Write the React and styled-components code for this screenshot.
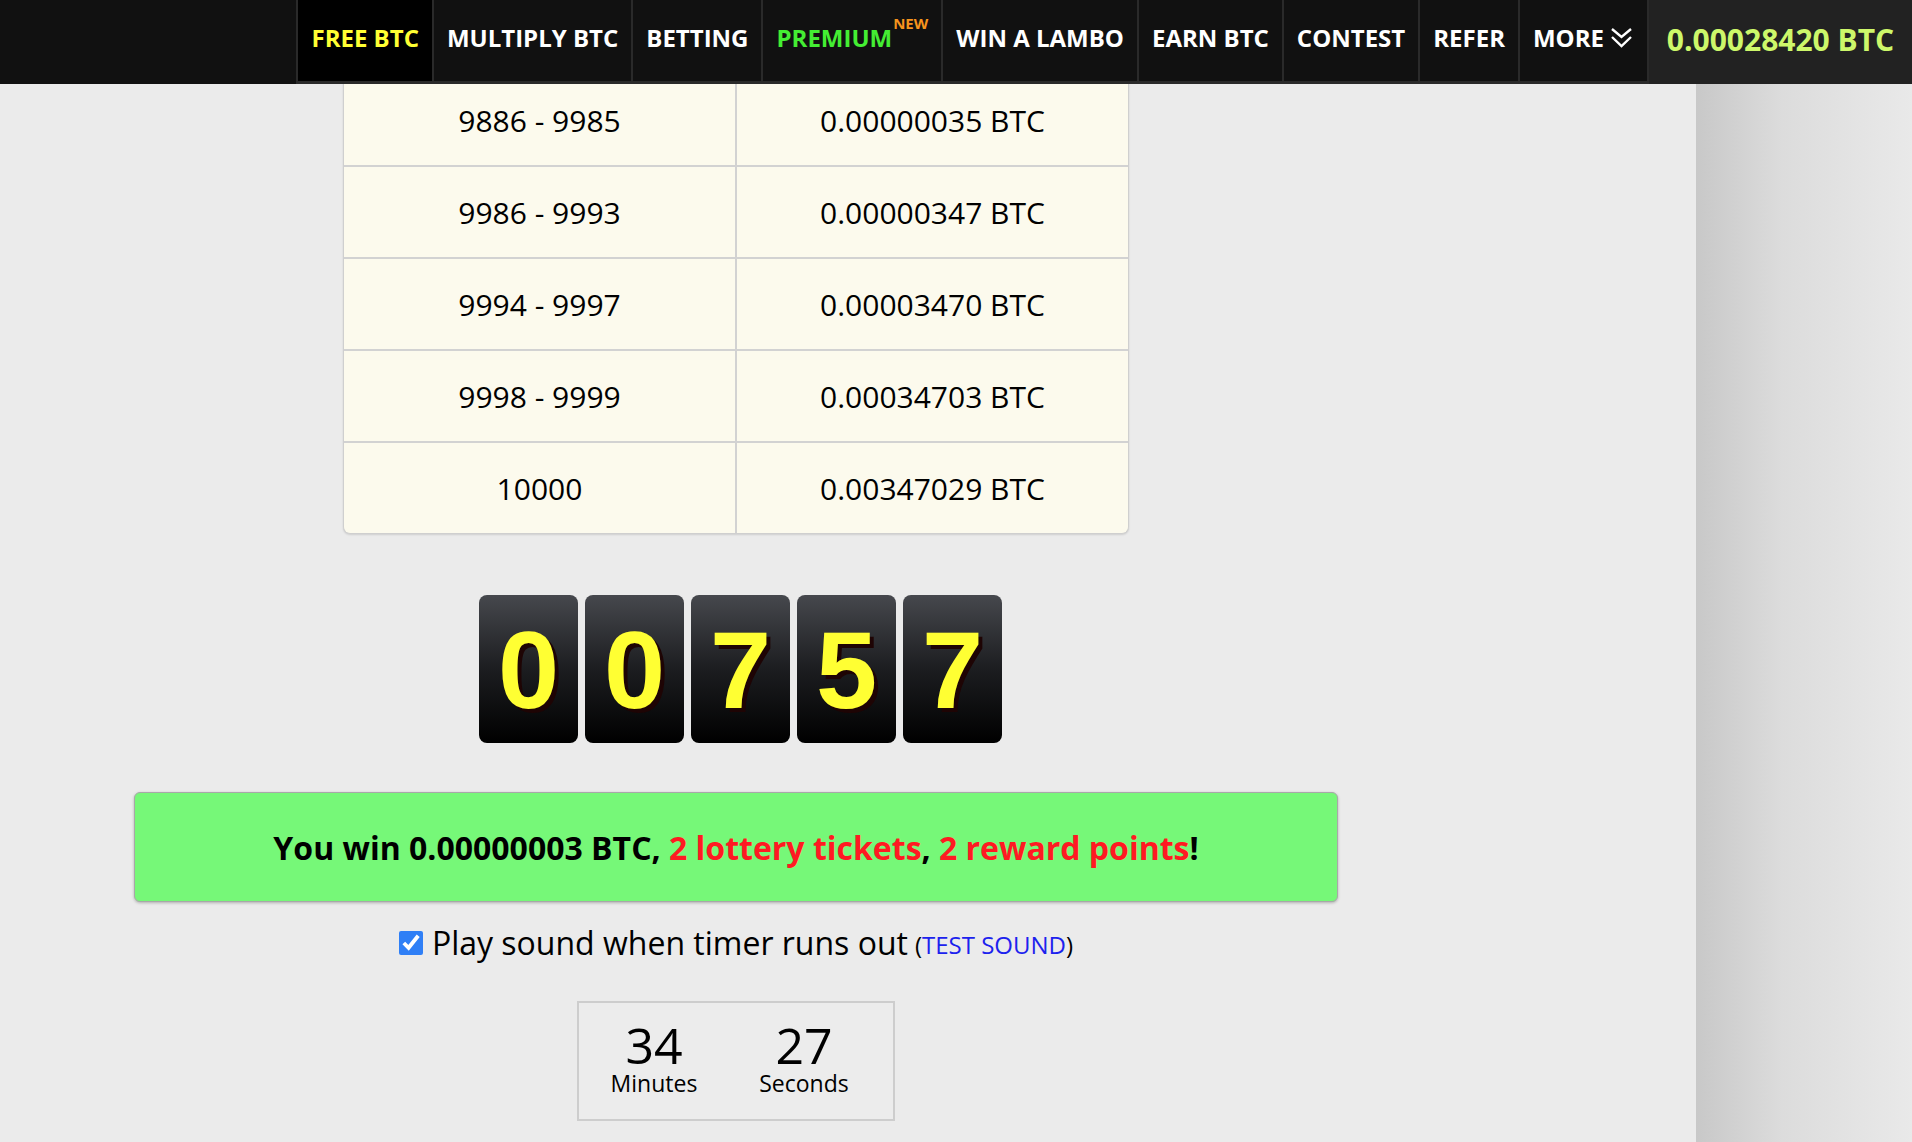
import React from "react";
import styled, { createGlobalStyle } from "styled-components";

const GlobalStyle = createGlobalStyle`
  body {
    margin: 0;
    font-family: "Open Sans", "Liberation Sans", sans-serif;
    background: #eaeaea;
    color: #000;
  }
`;

const menu = [
  { label: "FREE BTC", color: "#ffff33", active: true },
  { label: "MULTIPLY BTC" },
  { label: "BETTING" },
  { label: "PREMIUM", color: "#44ee33", badge: "NEW" },
  { label: "WIN A LAMBO" },
  { label: "EARN BTC" },
  { label: "CONTEST" },
  { label: "REFER" },
  { label: "MORE", more: true },
];

const payouts = [
  ["9886 - 9985", "0.00000035 BTC"],
  ["9986 - 9993", "0.00000347 BTC"],
  ["9994 - 9997", "0.00003470 BTC"],
  ["9998 - 9999", "0.00034703 BTC"],
  ["10000", "0.00347029 BTC"],
];

const digits = ["0", "0", "7", "5", "7"];

function ChevronsDown() {
  return (
    <svg width="25" height="22" viewBox="0 0 25 22" fill="none">
      <polyline points="3,2 12.5,10 22,2" stroke="#fff" strokeWidth="2.4" />
      <polyline points="3,10 12.5,19 22,10" stroke="#fff" strokeWidth="2.4" />
    </svg>
  );
}

export default function App() {
  return (
    <>
      <GlobalStyle />
      <TopBar>
        <Spacer />
        <Menu>
          {menu.map((item) => (
            <MenuItem key={item.label} $active={item.active} $color={item.color}>
              {item.label}
              {item.badge && <Badge>{item.badge}</Badge>}
              {item.more && <ChevronsDown />}
            </MenuItem>
          ))}
        </Menu>
        <Balance>0.00028420 BTC</Balance>
      </TopBar>
      <Layout>
        <Main>
          <Column>
            <TableWrap>
              <PayoutTable>
                <tbody>
                  {payouts.map(([range, amount]) => (
                    <tr key={range}>
                      <Cell>{range}</Cell>
                      <Cell>{amount}</Cell>
                    </tr>
                  ))}
                </tbody>
              </PayoutTable>
            </TableWrap>

            <Flipper>
              {digits.map((d, i) => (
                <DigitBox key={i}>{d}</DigitBox>
              ))}
            </Flipper>

            <WinBar>
              You win 0.00000003 BTC, <Red>2 lottery tickets</Red>,{" "}
              <Red>2 reward points</Red>!
            </WinBar>

            <SoundRow>
              <Check type="checkbox" defaultChecked />
              <span>Play sound when timer runs out</span>
              <TestSound>
                (<a>TEST SOUND</a>)
              </TestSound>
            </SoundRow>

            <TimerBox>
              <TimerCol>
                <TimerNum>34</TimerNum>
                <TimerLabel>Minutes</TimerLabel>
              </TimerCol>
              <TimerCol>
                <TimerNum>27</TimerNum>
                <TimerLabel>Seconds</TimerLabel>
              </TimerCol>
            </TimerBox>
          </Column>
        </Main>
        <Shade />
      </Layout>
    </>
  );
}

const TopBar = styled.header`
  position: fixed;
  top: 0;
  left: 0;
  right: 0;
  z-index: 10;
  height: 84px;
  display: flex;
  background: #111;
`;

const Spacer = styled.div`
  flex: 1;
`;

const Menu = styled.nav`
  display: flex;
  border-bottom: 3px solid #2a2a2a;
  border-left: 2px solid #2a2a2a;
  height: 81px;
`;

const MenuItem = styled.div`
  display: flex;
  align-items: center;
  gap: 5px;
  padding: 0 13px 6px;
  border-right: 2px solid #2a2a2a;
  background: ${(p) => (p.$active ? "#000" : "#111")};
  color: ${(p) => p.$color || "#fff"};
  font-size: 24px;
  font-weight: 700;
  white-space: nowrap;
`;

const Badge = styled.sup`
  color: #f7941d;
  font-size: 15px;
  font-weight: 700;
  margin-left: -4px;
  align-self: flex-start;
  margin-top: 13px;
`;

const Balance = styled.div`
  width: 263px;
  height: 84px;
  display: flex;
  align-items: center;
  justify-content: center;
  padding-bottom: 6px;
  box-sizing: border-box;
  background: #222;
  color: #cdf76a;
  font-size: 30px;
  font-weight: 700;
  white-space: nowrap;
`;

const Layout = styled.div`
  display: flex;
  min-height: 100vh;
`;

const Main = styled.main`
  width: 1696px;
  flex-shrink: 0;
  padding-top: 73px;
  padding-bottom: 40px;
  background: #ebebeb;
`;

const Shade = styled.div`
  flex: 1;
  background: linear-gradient(to right, #c8c8c8 0%, #dcdcdc 40%, #e9e9e9 100%);
`;

const Column = styled.div`
  width: 1472px;
  display: flex;
  flex-direction: column;
  align-items: center;
`;

const TableWrap = styled.div`
  width: 784px;
  border: 1px solid #cfcfcf;
  border-top: none;
  border-radius: 0 0 7px 7px;
  overflow: hidden;
  box-shadow: 0 1px 2px rgba(0, 0, 0, 0.12);
  background: #fcfaed;
`;

const PayoutTable = styled.table`
  width: 100%;
  border-collapse: collapse;
`;

const Cell = styled.td`
  width: 50%;
  height: 90px;
  padding: 0;
  text-align: center;
  font-size: 30px;
  border-top: 2px solid #d2d2d2;
  &:first-child {
    border-right: 2px solid #d2d2d2;
  }
`;

const Flipper = styled.div`
  display: flex;
  gap: 7px;
  margin-top: 61px;
  padding-left: 9px;
`;

const DigitBox = styled.div`
  width: 99px;
  height: 148px;
  border-radius: 8px;
  background: linear-gradient(to bottom, #46484d 0%, #1c1d20 50%, #000 100%);
  display: flex;
  align-items: center;
  justify-content: center;
  color: #ffff33;
  font-family: "Liberation Sans", Arial, sans-serif;
  font-weight: 700;
  font-size: 110px;
  text-shadow: 4px 4px 0 #1e0404;
`;

const WinBar = styled.div`
  margin-top: 49px;
  width: 1204px;
  height: 110px;
  box-sizing: border-box;
  display: flex;
  align-items: center;
  justify-content: center;
  background: #76f878;
  border: 1px solid #a8a8a8;
  border-radius: 6px;
  box-shadow: 0 1px 3px rgba(0, 0, 0, 0.25);
  font-size: 32px;
  font-weight: 700;
  white-space: pre;
`;

const Red = styled.span`
  color: #ff1a22;
`;

const SoundRow = styled.label`
  margin-top: 17px;
  display: flex;
  align-items: center;
  gap: 9px;
  font-size: 32px;
  line-height: 44px;
`;

const Check = styled.input`
  width: 24px;
  height: 24px;
  margin: 0;
  accent-color: #2f7ff6;
`;

const TestSound = styled.span`
  font-size: 24px;
  margin-left: -2px;
  padding-top: 4px;
  a {
    color: #1c22ee;
  }
`;

const TimerBox = styled.div`
  margin-top: 34px;
  width: 318px;
  height: 120px;
  box-sizing: border-box;
  border: 2px solid #cdcdcd;
  background: #ececec;
  display: grid;
  grid-template-columns: 150px 150px;
  align-content: start;
  padding-top: 16px;
`;

const TimerCol = styled.div`
  display: flex;
  flex-direction: column;
  align-items: center;
`;

const TimerNum = styled.div`
  font-size: 50px;
  line-height: 52px;
`;

const TimerLabel = styled.div`
  font-size: 23px;
  line-height: 24px;
`;
